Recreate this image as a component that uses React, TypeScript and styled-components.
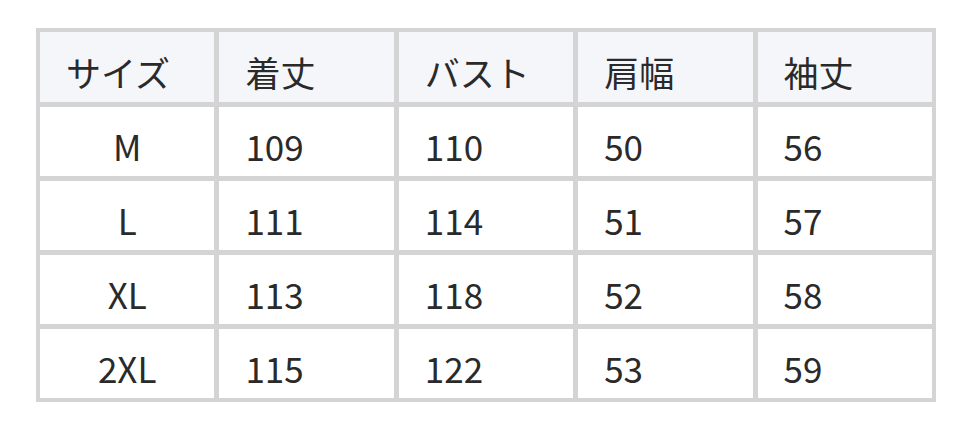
import React from 'react'
import styled, { createGlobalStyle } from 'styled-components'

const GlobalStyle = createGlobalStyle`
  body {
    margin: 0;
    background: #ffffff;
    font-family: 'Noto Sans CJK JP', 'Noto Sans', sans-serif;
  }
`

const Page = styled.div`
  padding: 28px 36px;
`

const Table = styled.div`
  display: grid;
  grid-template-columns: repeat(5, 1fr);
  grid-template-rows: 70px repeat(4, 69px);
  gap: 5px;
  padding: 4px;
  width: 900px;
  box-sizing: border-box;
  background: #d4d4d4;
`

const Cell = styled.div<{ $head?: boolean; $center?: boolean }>`
  display: flex;
  align-items: center;
  justify-content: ${(p) => (p.$center ? 'center' : 'flex-start')};
  padding: 8px ${(p) => (p.$center ? '0' : '26px')} 0;
  background: ${(p) => (p.$head ? '#f5f6fa' : '#ffffff')};
  color: #2a2a2a;
  font-size: 35px;
  line-height: 1;
`

const headers = ['サイズ', '着丈', 'バスト', '肩幅', '袖丈']
const rows = [
  ['M', '109', '110', '50', '56'],
  ['L', '111', '114', '51', '57'],
  ['XL', '113', '118', '52', '58'],
  ['2XL', '115', '122', '53', '59'],
]

const App = () => {
  return (
    <>
      <GlobalStyle />
      <Page>
        <Table>
          {headers.map((h) => (
            <Cell key={h} $head>{h}</Cell>
          ))}
          {rows.map((r) =>
            r.map((v, i) => (
              <Cell key={r[0] + i} $center={i === 0}>{v}</Cell>
            ))
          )}
        </Table>
      </Page>
    </>
  )
}

export default App
